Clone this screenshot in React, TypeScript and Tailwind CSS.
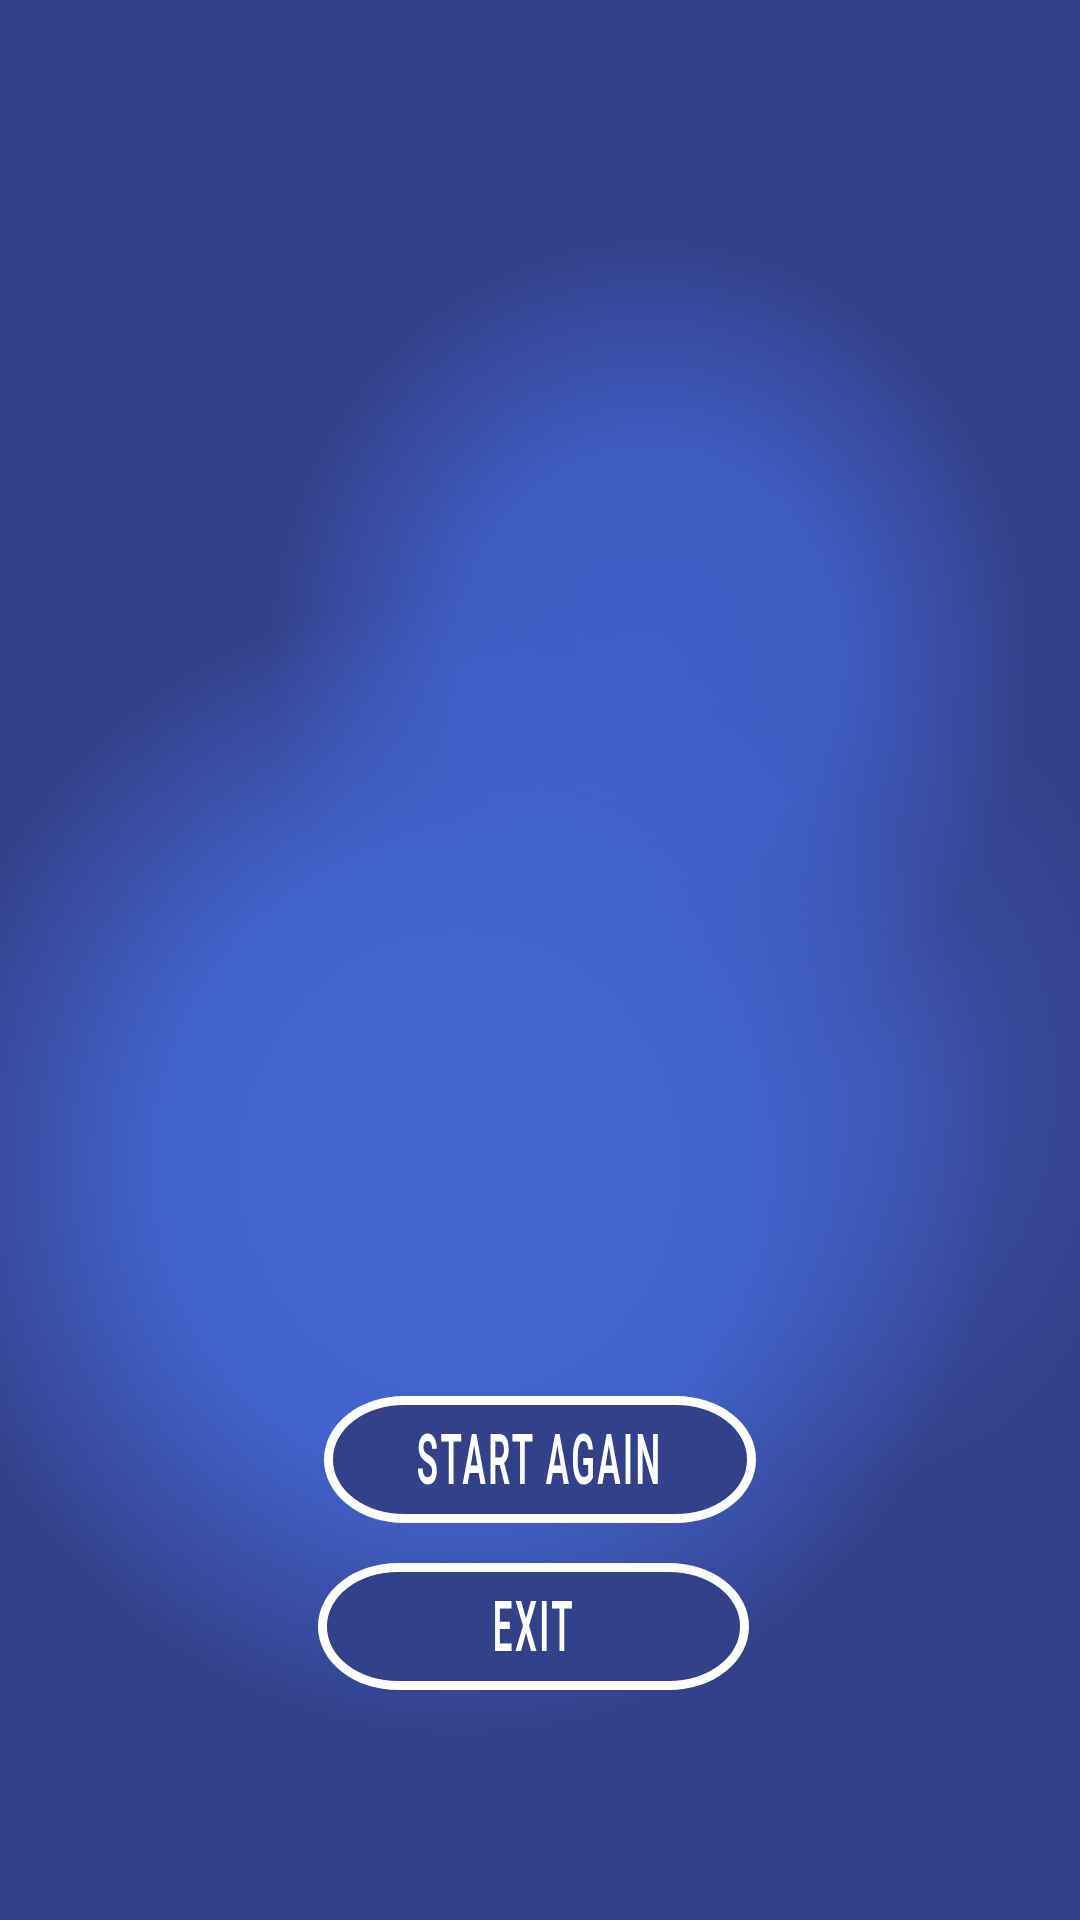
import React from "react";

export default function App() {
  return (
    <div
      className="relative w-[1080px] h-[1920px] overflow-hidden bg-[#33418b] flex flex-col items-center justify-end pb-[230px]"
      style={{ fontFamily: "Roboto, 'Liberation Sans', sans-serif" }}
    >
      <div className="absolute inset-0 pointer-events-none bg-[radial-gradient(ellipse_540px_570px_at_460px_1165px,#4366d1_0%,#4263cc_55%,rgba(66,99,204,0)_100%),radial-gradient(ellipse_380px_420px_at_650px_660px,#405ec6_0%,#3f5cc2_50%,rgba(63,92,194,0)_100%),radial-gradient(ellipse_280px_400px_at_870px_1080px,rgba(62,86,180,0.75)_0%,rgba(62,86,180,0)_100%)]" />
      <button className="relative w-[432px] h-[127px] border-[9px] border-white rounded-[80px/63px] bg-[#33418b] flex items-center justify-center">
        <span className="text-white text-[71px] font-semibold leading-none tracking-[0.07em] scale-x-[0.49] whitespace-nowrap">START AGAIN</span>
      </button>
      <button className="relative mt-[40px] mr-[13px] w-[431px] h-[127px] border-[9px] border-white rounded-[80px/63px] bg-[#33418b] flex items-center justify-center">
        <span className="text-white text-[71px] font-semibold leading-none tracking-[0.07em] scale-x-[0.49] whitespace-nowrap">EXIT</span>
      </button>
    </div>
  );
}
